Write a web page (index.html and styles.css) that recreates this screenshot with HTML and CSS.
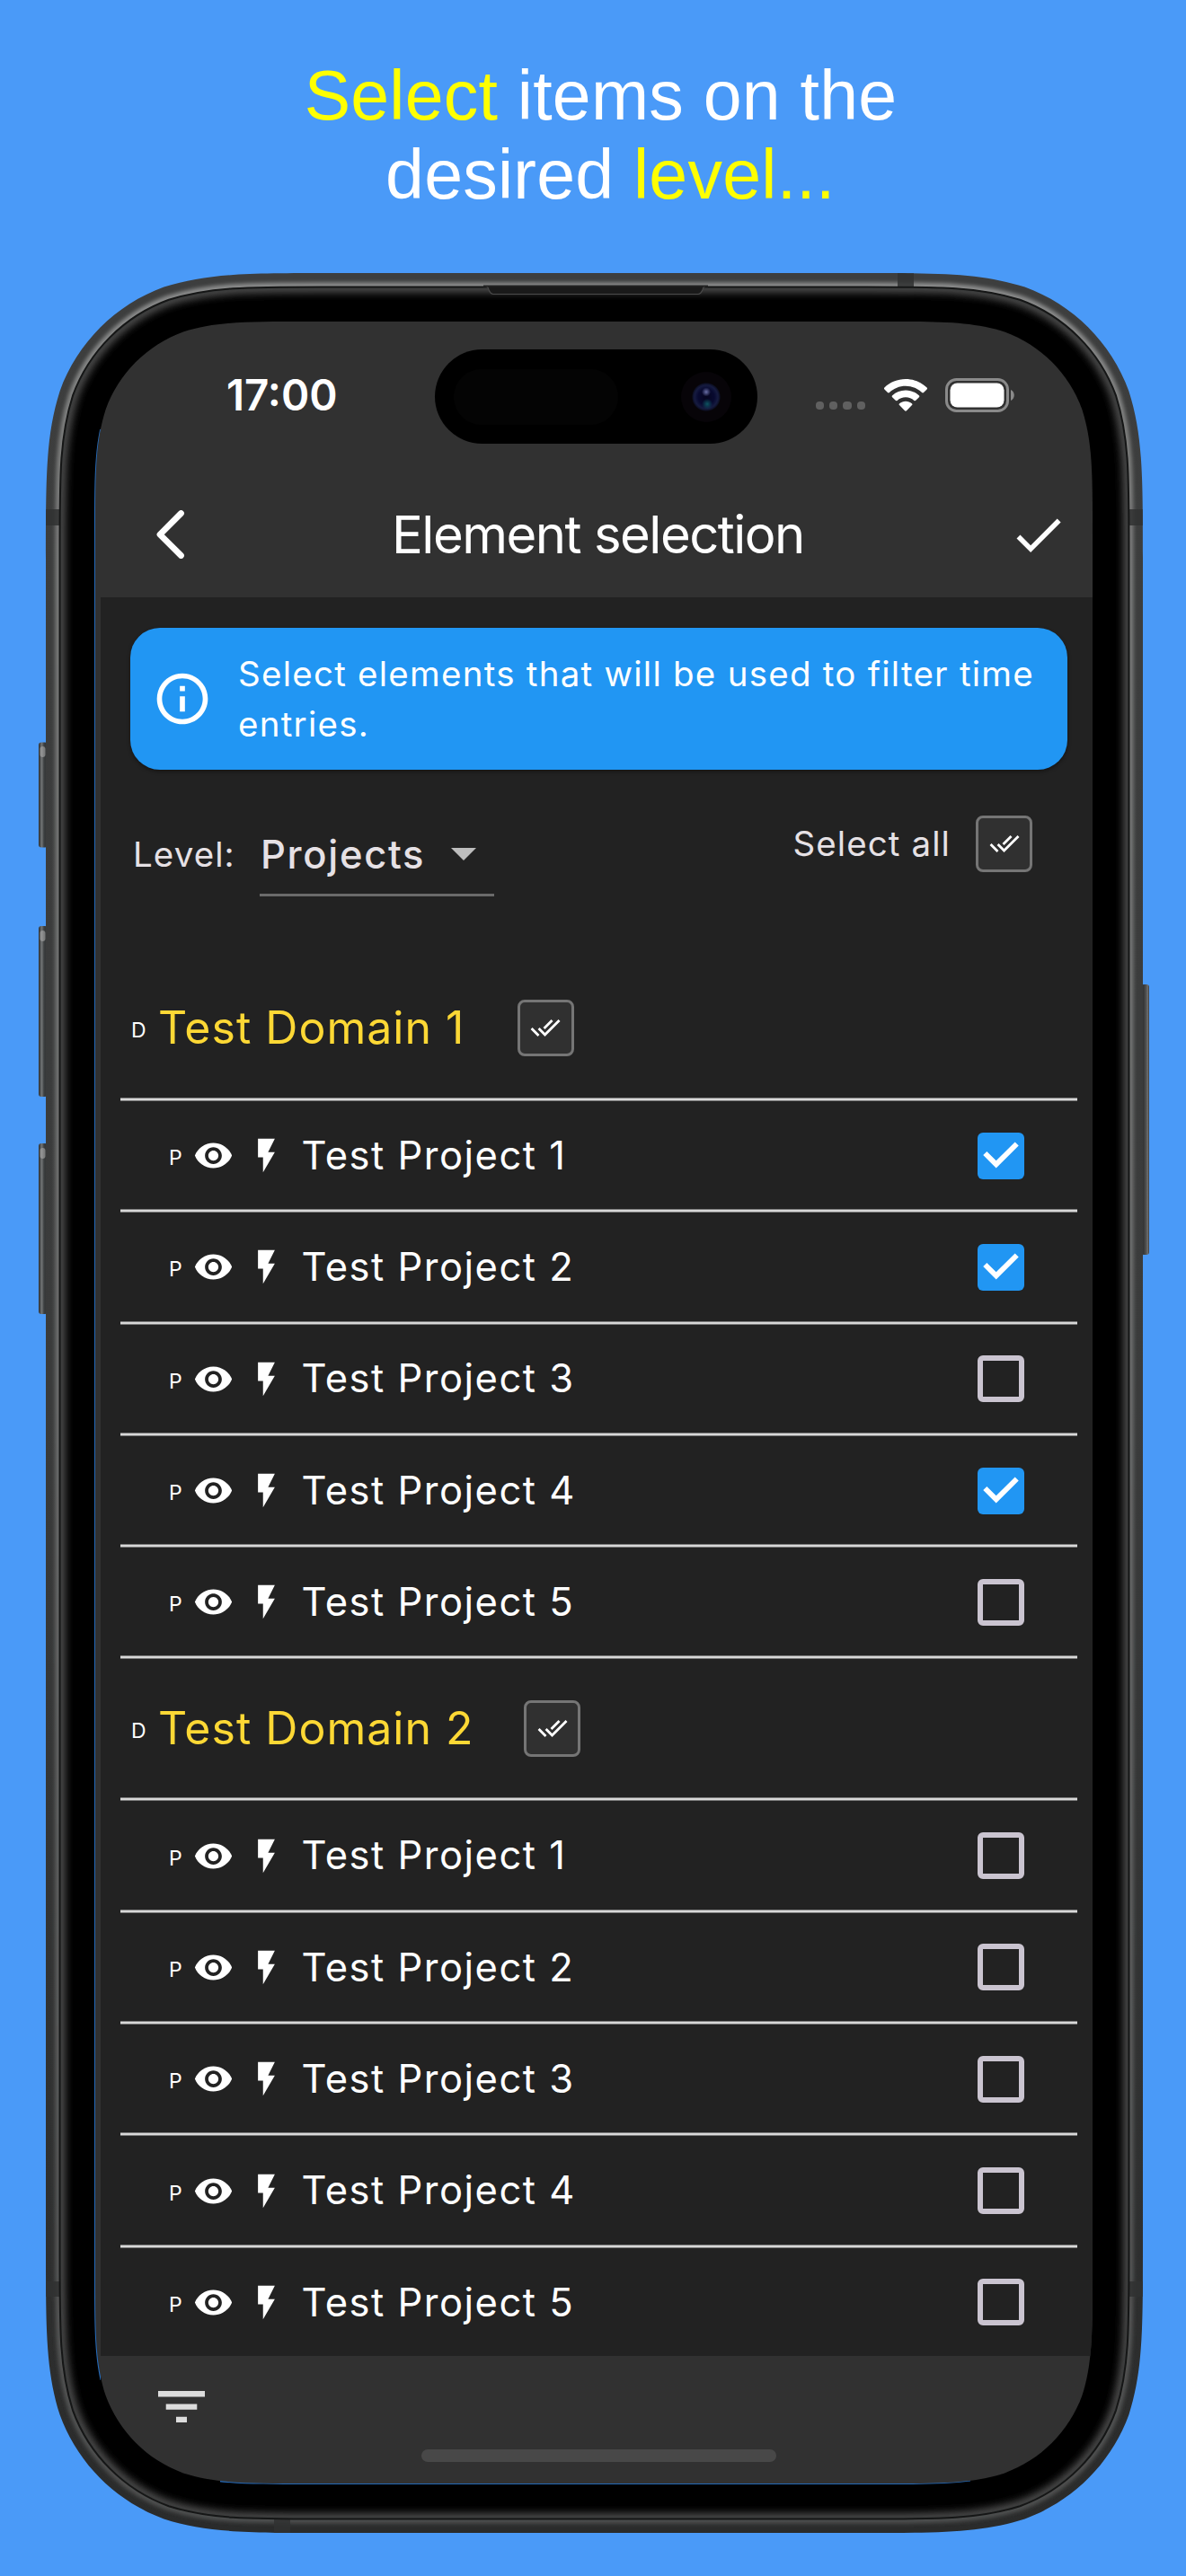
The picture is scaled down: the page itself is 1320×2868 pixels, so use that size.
FILE: index.html
```
<!DOCTYPE html>
<html lang="en">
<head>
<meta charset="utf-8">
<title>Element selection</title>
<link rel="stylesheet" href="styles.css">
</head>
<body>
<svg class="defs" width="0" height="0" aria-hidden="true">
  <symbol id="eye" viewBox="0 0 24 24"><path d="M12 4.500C7 4.500 2.730 7.610 1 12c1.730 4.390 6 7.500 11 7.500s9.270-3.110 11-7.500c-1.730-4.390-6-7.500-11-7.500zM12 17c-2.760 0-5-2.240-5-5s2.240-5 5-5 5 2.240 5 5-2.240 5-5 5zm0-8c-1.660 0-3 1.340-3 3s1.340 3 3 3 3-1.340 3-3-1.340-3-3-3z"/></symbol>
  <symbol id="bolt" viewBox="0 0 24 24"><path d="M7 2v11h3v9l7-12h-4l4-8z"/></symbol>
  <symbol id="done-all" viewBox="0 0 24 24"><path d="M18 7l-1.410-1.410-6.340 6.340 1.410 1.410L18 7zm4.240-1.410L11.660 16.170 7.480 12l-1.410 1.410L11.660 19l12-12-1.420-1.410zM.41 13.410L6 19l1.410-1.410L1.830 12 .41 13.410z"/></symbol>
  <symbol id="tick" viewBox="0 0 52 52"><path d="M8.300 23 20.700 35.400 43.700 12.500" fill="none" stroke="#fff" stroke-width="5.800"/></symbol>
</svg>

<main class="poster">
  <h1 class="headline"><em>Select</em> items on the<br>&nbsp;desired <em>level...</em></h1>

  <div class="phone">
    <svg class="frame" viewBox="0 0 1240 2520" aria-hidden="true">
      <defs>
        <linearGradient id="metal" x1="0" y1="0" x2="0" y2="1">
          <stop offset="0" stop-color="#3d3e3e"/><stop offset=".5" stop-color="#3a3b3b"/><stop offset="1" stop-color="#2a2b2b"/>
        </linearGradient>
        <linearGradient id="shine" x1="0" y1="0" x2="0" y2="1">
          <stop offset="0" stop-color="#8c8d8d"/><stop offset=".08" stop-color="#7c7d7c"/><stop offset=".5" stop-color="#6d6e6e"/><stop offset="1" stop-color="#4e4f4f"/>
        </linearGradient>
        <linearGradient id="button" x1="0" y1="0" x2="1" y2="0">
          <stop offset="0" stop-color="#2b2d2e"/><stop offset=".35" stop-color="#707374"/><stop offset=".6" stop-color="#3c3f40"/><stop offset="1" stop-color="#2c2e2f"/>
        </linearGradient>
        <linearGradient id="button-right" x1="0" y1="0" x2="1" y2="0">
          <stop offset="0" stop-color="#222"/><stop offset=".5" stop-color="#454646"/><stop offset=".85" stop-color="#6d6e6e"/><stop offset="1" stop-color="#333"/>
        </linearGradient>
        <filter id="soft-2" x="-5%" y="-5%" width="110%" height="110%"><feGaussianBlur stdDeviation="2.200"/></filter>
        <filter id="soft-5" x="-5%" y="-5%" width="110%" height="110%"><feGaussianBlur stdDeviation="4.500"/></filter>
        <path id="outer" d="M11 322c0-91.600 0-137.300 15.600-186.600c19.600-53.800 62-96.200 115.800-115.800c49.300-15.600 95.100-15.600 186.600-15.600H914c91.600 0 137.300 0 186.600 15.600c53.800 19.600 96.200 62 115.800 115.800c15.600 49.300 15.600 95.100 15.600 186.600V2202c0 91.600 0 137.300-15.600 186.600c-19.600 53.800-62 96.200-115.800 115.800c-49.300 15.600-95.100 15.600-186.600 15.600H329c-91.600 0-137.300 0-186.600-15.600c-53.800-19.600-96.200-62-115.800-115.800c-15.600-49.300-15.600-95.100-15.600-186.600z"/>
        <path id="inner" d="M26.500 313c0-84.500 0-126.800 14.400-172.300c18.100-49.700 57.200-88.800 106.900-106.900c45.500-14.400 87.700-14.400 172.300-14.400H922.900c84.500 0 126.800 0 172.300 14.400c49.700 18.100 88.800 57.200 106.900 106.900c14.400 45.500 14.400 87.700 14.400 172.300V2211c0 84.500 0 126.800-14.400 172.300c-18.100 49.700-57.200 88.800-106.900 106.900c-45.500 14.400-87.700 14.400-172.300 14.400H320.100c-84.500 0-126.800 0-172.300-14.400c-49.700-18.100-88.800-57.200-106.900-106.900c-14.400-45.500-14.400-87.700-14.400-172.300z"/>
        <clipPath id="outer-clip"><use href="#outer"/></clipPath>
        <clipPath id="inner-clip"><use href="#inner"/></clipPath>
        <clipPath id="edge-clip"><path d="M60 178h12V2350H60zM205 2450H1040v20H205z"/></clipPath>
      </defs>
      <rect x="3" y="526.500" width="10" height="117" rx="3" fill="url(#button)"/>
      <rect x="3" y="731" width="10" height="190" rx="3" fill="url(#button)"/>
      <rect x="3" y="973" width="10" height="190" rx="3" fill="url(#button)"/>
      <rect x="4.500" y="531" width="6" height="12" rx="3" fill="#aaa" opacity=".6"/>
      <rect x="4.500" y="736" width="6" height="12" rx="3" fill="#aaa" opacity=".6"/>
      <rect x="4.500" y="978" width="6" height="12" rx="3" fill="#aaa" opacity=".6"/>
      <rect x="1230" y="796" width="9" height="301" rx="3" fill="url(#button-right)"/>
      <use href="#outer" fill="url(#metal)"/>
      <g clip-path="url(#outer-clip)">
        <use href="#inner" fill="none" stroke="url(#shine)" stroke-width="10" filter="url(#soft-2)"/>
        <g fill="#303131" opacity=".85">
          <rect x="11" y="267" width="15" height="18"/><rect x="1217" y="267" width="15" height="18"/>
          <rect x="11" y="2240" width="15" height="17"/><rect x="1217" y="2240" width="15" height="17"/>
          <rect x="959" y="4" width="18" height="15"/><rect x="265" y="2505" width="18" height="15"/>
        </g>
      </g>
      <use href="#inner" fill="#000"/>
      <g clip-path="url(#inner-clip)">
        <use href="#inner" fill="none" stroke="#4c4c4c" stroke-width="13" filter="url(#soft-5)"/>
        <use href="#inner" fill="none" stroke="#3c3d3d" stroke-width="5"/>
      </g>
      <use href="#inner" fill="none" stroke="#151616" stroke-width="2"/>
      <path d="M500 18.500q3 0 4 4q2 5 5 5H737q3 0 5-5q1-4 4-4z" fill="#1a1a1a" stroke="#4b4b4b" stroke-width="1.200"/>
      <path d="M498 18.500H748" stroke="#222" stroke-width="2"/>
      <g clip-path="url(#edge-clip)"><path transform="translate(65 59)" fill="#2469b8" d="M0 237c0-68.200 0-102.300 11.600-139.100c14.600-40.100 46.200-71.700 86.300-86.300c36.700-11.600 70.800-11.600 139.100-11.600H873c68.200 0 102.300 0 139.100 11.600c40.100 14.600 71.700 46.200 86.300 86.300c11.600 36.700 11.600 70.800 11.600 139.100V2170c0 68.200 0 102.300-11.600 139.100c-14.600 40.100-46.200 71.700-86.300 86.300c-36.700 11.600-70.800 11.600-139.100 11.600H237c-68.200 0-102.300 0-139.100-11.600c-40.100-14.600-71.700-46.200-86.300-86.300c-11.600-36.700-11.600-70.800-11.600-139.100z"/></g>
    </svg>

    <div class="screen">
      <div class="status">
        <span class="time">17:00</span>
        <div class="island"><span class="sensor"></span><span class="camera"></span></div>
        <div class="indicators">
          <span class="signal"><i></i><i></i><i></i><i></i></span>
          <svg class="wifi" viewBox="0 0 48 36"><path fill="#fff" d="M24 0C33 0 41.500 3.500 47.600 9.500c.6.600.6 1.300 0 1.900L44 15c-.6.600-1.300.6-1.900 0C37.200 10.500 31 7.800 24 7.800S10.800 10.500 5.900 15c-.6.600-1.300.6-1.900 0L.4 11.400c-.6-.6-.6-1.300 0-1.900C6.500 3.500 15 0 24 0zM24 12.500c5.700 0 10.900 2.200 14.800 5.800.7.600.7 1.300.1 1.900l-3.600 3.600c-.6.600-1.300.6-1.900.1C30.800 21.700 27.600 20.300 24 20.300s-6.800 1.400-9.400 3.600c-.6.500-1.300.5-1.900-.1l-3.600-3.600c-.6-.6-.6-1.300.1-1.900 3.900-3.600 9.100-5.800 14.800-5.800zM24 24.800c2.600 0 5 .9 6.900 2.400.7.600.7 1.300.1 1.900l-6 6.200c-.6.600-1.400.6-2 0l-6-6.200c-.6-.6-.6-1.300.1-1.900 1.900-1.500 4.300-2.400 6.900-2.400z"/></svg>
          <svg class="battery" viewBox="0 0 78 38"><rect x="1.500" y="1.500" width="68" height="35" rx="11" fill="none" stroke="#8a8a8a" stroke-width="3"/><rect x="5.500" y="5.500" width="60" height="27" rx="8" fill="#fff"/><path d="M73 13c5 2 5 10 0 12z" fill="#8a8a8a"/></svg>
        </div>
      </div>

      <header class="nav">
        <svg class="back" viewBox="0 0 32 54"><path d="M27.500 3.500 4 27.100 27.500 50.500" fill="none" stroke="#fff" stroke-width="6.800" stroke-linecap="round" stroke-linejoin="round"/></svg>
        <h2 class="title">Element selection</h2>
        <svg class="confirm" viewBox="0 0 24 24"><path fill="#fff" d="M9 16.170 4.830 12l-1.420 1.410L9 19 21 7l-1.410-1.410z"/></svg>
      </header>

      <section class="content">
        <div class="info">
          <svg viewBox="0 0 24 24"><path fill="#fff" d="M11 7h2v2h-2zm0 4h2v6h-2zm1-9C6.480 2 2 6.480 2 12s4.480 10 10 10 10-4.480 10-10S17.520 2 12 2zm0 18c-4.410 0-8-3.590-8-8s3.590-8 8-8 8 3.590 8 8-3.590 8-8 8z"/></svg>
          <p>Select elements that will be used to filter time entries.</p>
        </div>

        <div class="controls">
          <span class="label level-label">Level:</span>
          <div class="dropdown"><span class="dropdown-value">Projects</span><svg viewBox="0 0 28 14"><path d="M0 0h28L14 14z" fill="#bdbdbd"/></svg></div>
          <div class="select-all"><span class="label">Select all</span><span class="all-button"><svg><use href="#done-all"/></svg></span></div>
        </div>

        <div class="domain"><span class="kind">D</span><span class="domain-name">Test Domain 1</span><span class="all-button"><svg><use href="#done-all"/></svg></span></div>
        <div class="project"><span class="kind">P</span><svg class="eye"><use href="#eye"/></svg><svg class="bolt"><use href="#bolt"/></svg><span class="name">Test Project 1</span><span class="box on"><svg><use href="#tick"/></svg></span></div>
        <div class="project"><span class="kind">P</span><svg class="eye"><use href="#eye"/></svg><svg class="bolt"><use href="#bolt"/></svg><span class="name">Test Project 2</span><span class="box on"><svg><use href="#tick"/></svg></span></div>
        <div class="project"><span class="kind">P</span><svg class="eye"><use href="#eye"/></svg><svg class="bolt"><use href="#bolt"/></svg><span class="name">Test Project 3</span><span class="box"></span></div>
        <div class="project"><span class="kind">P</span><svg class="eye"><use href="#eye"/></svg><svg class="bolt"><use href="#bolt"/></svg><span class="name">Test Project 4</span><span class="box on"><svg><use href="#tick"/></svg></span></div>
        <div class="project"><span class="kind">P</span><svg class="eye"><use href="#eye"/></svg><svg class="bolt"><use href="#bolt"/></svg><span class="name">Test Project 5</span><span class="box"></span></div>
        <div class="domain ruled"><span class="kind">D</span><span class="domain-name">Test Domain 2</span><span class="all-button"><svg><use href="#done-all"/></svg></span></div>
        <div class="project"><span class="kind">P</span><svg class="eye"><use href="#eye"/></svg><svg class="bolt"><use href="#bolt"/></svg><span class="name">Test Project 1</span><span class="box"></span></div>
        <div class="project"><span class="kind">P</span><svg class="eye"><use href="#eye"/></svg><svg class="bolt"><use href="#bolt"/></svg><span class="name">Test Project 2</span><span class="box"></span></div>
        <div class="project"><span class="kind">P</span><svg class="eye"><use href="#eye"/></svg><svg class="bolt"><use href="#bolt"/></svg><span class="name">Test Project 3</span><span class="box"></span></div>
        <div class="project"><span class="kind">P</span><svg class="eye"><use href="#eye"/></svg><svg class="bolt"><use href="#bolt"/></svg><span class="name">Test Project 4</span><span class="box"></span></div>
        <div class="project"><span class="kind">P</span><svg class="eye"><use href="#eye"/></svg><svg class="bolt"><use href="#bolt"/></svg><span class="name">Test Project 5</span><span class="box"></span></div>
      </section>

      <footer class="bottom">
        <svg class="filter" viewBox="0 0 52 36"><path fill="#dcdcdc" d="M0 0h52v6.500H0zM8.700 14.500h34.600v6.200H8.700zM20 28.800h12v6.200H20z"/></svg>
        <span class="home"></span>
      </footer>
    </div>
  </div>
</main>
</body>
</html>
```
FILE: styles.css
```
* { box-sizing: border-box; }
body { margin: 0; background: #4a9af8; font-family: Inter, "Liberation Sans", sans-serif; }
svg { display: block; flex: none; }
.defs { position: absolute; }

.poster { width: 1320px; height: 2868px; overflow: hidden; display: flex; flex-direction: column; }
.headline {
  height: 300px; margin: 0; padding: 62px 0 0 17px; text-align: center;
  font: 400 77px/88px "Liberation Sans", Arial, sans-serif; letter-spacing: .25px; color: #fff;
}
.headline em { font-style: normal; color: #ff0; }

.phone { position: relative; width: 1240px; height: 2520px; margin-left: 40px; padding: 58px 0 0 66px; }
.frame { position: absolute; inset: 0; width: 1240px; height: 2520px; }
.screen {
  position: relative; width: 1110px; height: 2407px; display: flex; flex-direction: column; background: #313131;
  clip-path: path("M0 237c0-68.200 0-102.300 11.600-139.100c14.600-40.100 46.200-71.700 86.300-86.300c36.700-11.600 70.800-11.600 139.100-11.600H873c68.200 0 102.300 0 139.100 11.600c40.100 14.600 71.700 46.200 86.300 86.300c11.600 36.700 11.600 70.800 11.600 139.100V2170c0 68.200 0 102.300-11.600 139.100c-14.600 40.100-46.200 71.700-86.300 86.300c-36.700 11.600-70.800 11.600-139.100 11.600H237c-68.200 0-102.300 0-139.100-11.600c-40.100-14.600-71.700-46.200-86.300-86.300c-11.600-36.700-11.600-70.800-11.600-139.100z");
}

.status { height: 167px; display: grid; grid-template-columns: 378px 359px 1fr; align-items: center; color: #fff; }
.time { padding: 0 0 4px 146px; font-size: 47.500px; font-weight: 600; line-height: 1; }
.island {
  height: 105px; border-radius: 53px; background: #000; display: flex; align-items: center;
  justify-content: space-between; padding: 0 29px 0 21px;
}
.sensor { width: 183px; height: 62px; border-radius: 31px; background: #040404; }
.camera {
  width: 56px; height: 56px; border-radius: 50%;
  background:
    radial-gradient(circle at 50% 40%, #6a70a8 0, transparent 5px),
    radial-gradient(circle at 52% 64%, #0e5460 0, transparent 6px),
    radial-gradient(circle, #05051e 0, #080a30 9px, #161b40 13px, #0d1026 15px, #070408 16px);
}
.indicators { display: flex; align-items: center; padding: 0 0 4px 65px; }
.signal { display: flex; gap: 6px; margin-top: 24px; }
.signal i { width: 9.200px; height: 9.600px; border-radius: 4px; background: #606060; }
.wifi { width: 48px; height: 36px; margin-left: 21px; }
.battery { width: 78px; height: 38px; margin-left: 20px; }

.nav { height: 140px; display: flex; align-items: center; padding: 0 27px 0 68px; }
.back { width: 32px; height: 54px; }
.title { margin: 0 0 0 230px; font-size: 58px; font-weight: 400; line-height: 1; letter-spacing: -1.500px; color: #fff; white-space: nowrap; }
.confirm { width: 67px; height: 67px; margin-left: auto; }

.content { height: 1957.500px; margin-left: 6px; background: #222; overflow: hidden; }
.info {
  width: 1043px; height: 158px; margin: 34px 0 0 33px; padding: 0 20px 0 24px; border-radius: 33px;
  background: #2196f3; box-shadow: 0 2px 4px #0006; display: flex; align-items: center;
}
.info svg { width: 68px; height: 68px; }
.info p { margin: 0 0 0 28px; font-size: 38.500px; line-height: 56.500px; letter-spacing: 1.250px; color: #fff; }

.controls { height: 197px; display: flex; align-items: flex-start; padding: 50px 67px 0 36px; color: #e6e1e5; }
.label { font-size: 38.500px; line-height: 64px; letter-spacing: 1.100px; }
.level-label { width: 141px; margin-top: 12px; }
.dropdown { width: 261px; height: 91px; display: flex; align-items: center; padding: 0 20px 0 1px; justify-content: space-between; border-bottom: 3px solid #6a6a6a; }
.dropdown-value { font-size: 43.500px; line-height: 60px; font-weight: 500; letter-spacing: 1.700px; }
.dropdown svg { width: 28px; height: 14px; }
.select-all { margin-left: auto; display: flex; align-items: center; gap: 28px; }
.all-button {
  width: 63px; height: 63px; border: 3px solid #757575; border-radius: 8px; background: #303030;
  display: flex; align-items: center; justify-content: center;
}
.all-button svg { width: 34px; height: 34px; fill: #fff; }

.domain { height: 168px; display: flex; align-items: center; padding: 12px 0 0 34px; }
.kind { width: 30px; margin-top: 7px; font-size: 23px; line-height: 1; color: #fff; }
.domain-name { margin-right: 58.500px; font-size: 50px; line-height: 1; letter-spacing: 1px; color: #fdd835; }
.ruled, .project {
  background: linear-gradient(#7e7e7e 0 1px, #d8d8d8 1px 3px, #7e7e7e 3px 4px) no-repeat 22px 0 / 1065px 4px;
}
.ruled { height: 158px; padding-top: 4px; }
.ruled .domain-name { margin-right: 56px; }
.project { height: 124.300px; display: flex; align-items: center; padding: 5px 76px 0 76px; color: #fff; }
.project .kind { width: 27px; margin-top: 6px; }
.eye, .bolt { width: 45px; height: 45px; fill: #fff; }
.bolt { margin-left: 14px; }
.name { margin-left: 16.500px; font-size: 43.500px; line-height: 1; letter-spacing: 1.500px; }
.box { width: 52px; height: 52px; margin-left: auto; border: 6px solid #cac4d0; border-radius: 6px; }
.box.on { border: 0; background: #2196f3; }
.box svg { width: 52px; height: 52px; }

.bottom { flex: 1; display: flex; flex-direction: column; padding: 39px 0 0 70px; }
.filter { width: 52px; height: 36px; }
.home { width: 395px; height: 14px; margin: 29px 0 0 293px; border-radius: 7px; background: #484848; }
```
